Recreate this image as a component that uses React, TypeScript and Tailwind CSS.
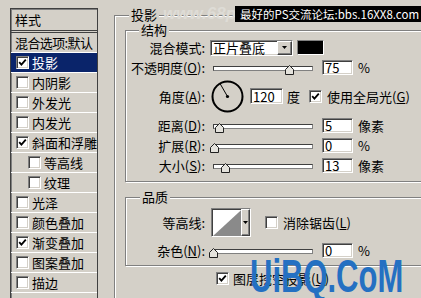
import React from 'react';

const sunken =
  'bg-white border border-t-[#808080] border-l-[#808080] border-b-white border-r-white shadow-[inset_1px_1px_0_#404040,inset_-1px_-1px_0_#d4d0c8]';
const raised =
  'bg-[#d4d0c8] border border-t-white border-l-white border-b-[#404040] border-r-[#404040] shadow-[inset_-1px_-1px_0_#808080]';
const etched =
  'border border-[#808080] shadow-[inset_1px_1px_0_#fff,1px_1px_0_#fff]';

function CheckBox({ on }: { on?: boolean }) {
  return (
    <span className={`w-[13px] h-[13px] shrink-0 flex items-center justify-center ${sunken}`}>
      {on && (
        <svg width="9" height="9" viewBox="0 0 9 9">
          <path d="M1.2 4.2 L3.4 6.6 L7.8 1.6" fill="none" stroke="#000" strokeWidth="1.8" />
        </svg>
      )}
    </span>
  );
}

// track is 100px wide, pos = thumb centre from the left end
function Slider({ pos }: { pos: number }) {
  return (
    <div className="relative w-[100px] h-[20px] ml-[3px] shrink-0">
      <div className="absolute left-0 right-0 top-[9px] h-[5px] bg-white border border-t-[#404040] border-l-[#404040] border-b-[#808080] border-r-[#808080]" />
      <svg
        className="absolute top-[8px]"
        style={{ left: pos - 4.5 }}
        width="9"
        height="10"
        viewBox="0 0 9 10"
      >
        <polygon points="4.5,0.5 8.5,4.5 8.5,9.5 0.5,9.5 0.5,4.5" fill="#e4e2dc" stroke="#202020" strokeWidth="1" />
      </svg>
    </div>
  );
}

function Field({ value, w = 'w-[31px]', className = '' }: { value: string; w?: string; className?: string }) {
  return (
    <div className={`${w} h-[15px] shrink-0 flex items-center pl-[2px] text-[13px] leading-none ${sunken} ${className}`}>
      {value}
    </div>
  );
}

function Label({ children }: { children: React.ReactNode }) {
  return <div className="w-[79px] shrink-0 text-right text-[13px] leading-none whitespace-nowrap">{children}</div>;
}

function SliderRow({ label, pos, value, unit }: { label: React.ReactNode; pos: number; value: string; unit: string }) {
  return (
    <div className="h-[20px] flex items-center">
      <Label>{label}</Label>
      <div className="w-[5px] shrink-0" />
      <Slider pos={pos} />
      <Field value={value} className="ml-[9px]" />
      <span className="ml-[5px] text-[13px] leading-none">{unit}</span>
    </div>
  );
}

const styles = [
  { label: '投影', on: true, sel: true },
  { label: '内阴影' },
  { label: '外发光' },
  { label: '内发光' },
  { label: '斜面和浮雕', on: true },
  { label: '等高线', indent: true },
  { label: '纹理', indent: true },
  { label: '光泽' },
  { label: '颜色叠加' },
  { label: '渐变叠加', on: true },
  { label: '图案叠加' },
  { label: '描边' },
];

export default function App() {
  return (
    <div className="relative w-[421px] h-[298px] overflow-hidden bg-[#d4d0c8] text-black font-['Noto_Sans_CJK_SC','Liberation_Sans',sans-serif] flex items-start">
      {/* style list */}
      <div className="mt-[8px] ml-[10px] w-[88px] shrink-0 border border-[#404040] shadow-[inset_1px_1px_0_#808080]">
        <div className="h-[24px] flex items-center pl-[4px] border-b-[3px] border-double border-[#404040] text-[13px] leading-none">
          样式
        </div>
        <div className="h-[20px] flex items-center pl-[4px] border-b border-white text-[13px] leading-none tracking-[-0.6px] whitespace-nowrap">
          混合选项:默认
        </div>
        {styles.map((s) => (
          <div
            key={s.label}
            className={`h-[20px] flex items-center border-b border-white text-[13px] leading-none whitespace-nowrap ${
              s.indent ? 'pl-[17px]' : 'pl-[5px]'
            } ${s.sel ? 'bg-[#0a246a] text-white' : ''}`}
          >
            <CheckBox on={s.on} />
            <span className="ml-[3px]">{s.label}</span>
          </div>
        ))}
        <div className="h-[20px]" />
      </div>

      {/* drop shadow settings */}
      <div className="ml-[16px] mt-[8px] shrink-0">
        <fieldset className={`w-[340px] pl-[10px] pb-[20px] ${etched}`}>
          <legend className="ml-[4px] px-[2px] bg-[#d4d0c8] text-[13px] leading-[14px]">投影</legend>

          <fieldset className={`w-[320px] pb-[6px] ${etched}`}>
            <legend className="ml-[13px] px-[2px] bg-[#d4d0c8] text-[13px] leading-[16px]">结构</legend>

            <div className="h-[19px] flex items-center">
              <Label>混合模式:</Label>
              <div className={`ml-[5px] w-[83px] h-[16px] flex items-center ${sunken}`}>
                <span className="pl-[2px] text-[13px] leading-none">正片叠底</span>
                <div className={`ml-auto w-[15px] h-[14px] flex items-center justify-center ${raised}`}>
                  <svg width="5" height="3" viewBox="0 0 5 3">
                    <polygon points="0,0 5,0 2.5,3" fill="#000" />
                  </svg>
                </div>
              </div>
              <div className="ml-[4px] w-[27px] h-[15px] bg-black border border-t-[#808080] border-l-[#808080] border-b-white border-r-white" />
            </div>

            <SliderRow label={<>不透明度(<u>O</u>):</>} pos={76} value="75" unit="%" />

            <div className="h-[38px] flex items-center">
              <Label>
                角度(<u>A</u>):
              </Label>
              <svg className="ml-[6px] shrink-0" width="33" height="33" viewBox="0 0 33 33">
                <circle cx="16.5" cy="16.5" r="15" fill="none" stroke="#000" strokeWidth="2" />
                <line x1="16.5" y1="16.5" x2="9" y2="3.5" stroke="#000" strokeWidth="1" />
                <circle cx="16.5" cy="16.5" r="1.6" fill="#000" />
              </svg>
              <Field value="120" w="w-[33px]" className="ml-[6px] h-[16px]" />
              <span className="ml-[4px] text-[13px] leading-none">度</span>
              <span className="ml-[9px]">
                <CheckBox on />
              </span>
              <span className="ml-[5px] text-[13px] leading-none whitespace-nowrap">
                使用全局光(<u>G</u>)
              </span>
            </div>

            <SliderRow label={<>距离(<u>D</u>):</>} pos={6} value="5" unit="像素" />
            <SliderRow label={<>扩展(<u>R</u>):</>} pos={1} value="0" unit="%" />
            <SliderRow label={<>大小(<u>S</u>):</>} pos={12} value="13" unit="像素" />
          </fieldset>

          <fieldset className={`mt-[7px] w-[320px] pb-[5px] ${etched}`}>
            <legend className="ml-[14px] px-[2px] bg-[#d4d0c8] text-[13px] leading-[16px]">品质</legend>

            <div className="h-[35px] flex items-center">
              <Label>等高线:</Label>
              <div className="ml-[6px] w-[40px] h-[29px] flex border border-t-[#808080] border-l-[#808080] border-b-white border-r-white shadow-[inset_1px_1px_0_#404040]">
                <svg className="mt-[1px] ml-[1px]" width="29" height="26" viewBox="0 0 29 26" preserveAspectRatio="none">
                  <rect x="0" y="0" width="29" height="26" fill="#fff" />
                  <polygon points="0,26 29,0 29,26" fill="#8a8a8a" />
                </svg>
                <div className={`w-[9px] flex items-center justify-center ${raised}`}>
                  <svg width="5" height="3" viewBox="0 0 5 3">
                    <polygon points="0,0 5,0 2.5,3" fill="#000" />
                  </svg>
                </div>
              </div>
              <span className="ml-[14px]">
                <CheckBox />
              </span>
              <span className="ml-[5px] text-[13px] leading-none whitespace-nowrap">
                消除锯齿(<u>L</u>)
              </span>
            </div>

            <SliderRow label={<>杂色(<u>N</u>):</>} pos={0} value="0" unit="%" />
          </fieldset>

          <div className="mt-[5px] h-[14px] ml-[91px] flex items-center">
            <CheckBox on />
            <span className="ml-[4px] text-[13px] leading-none whitespace-nowrap">
              图层挖空投影(<u>U</u>)
            </span>
          </div>
        </fieldset>
      </div>

      {/* overlays from the original screenshot */}
      <div className="absolute left-[163px] top-[5px] text-[17px] leading-none font-bold italic text-[#dedcd6] font-['Liberation_Sans',sans-serif] pointer-events-none">
        www.68ps.com
      </div>
      <div className="absolute left-[235px] top-[6px] right-0 h-[16px] bg-black text-white text-[11.5px] leading-[16px] pl-[5px] whitespace-nowrap">
        最好的PS交流论坛:bbs.16XX8.com
      </div>
      <div className="absolute left-[250px] top-[254px] origin-top-left scale-y-[1.48] text-[31px] leading-none font-bold text-[#2470c2] font-['Liberation_Sans',sans-serif] whitespace-nowrap pointer-events-none">
        UiBQ.CoM
      </div>
    </div>
  );
}
